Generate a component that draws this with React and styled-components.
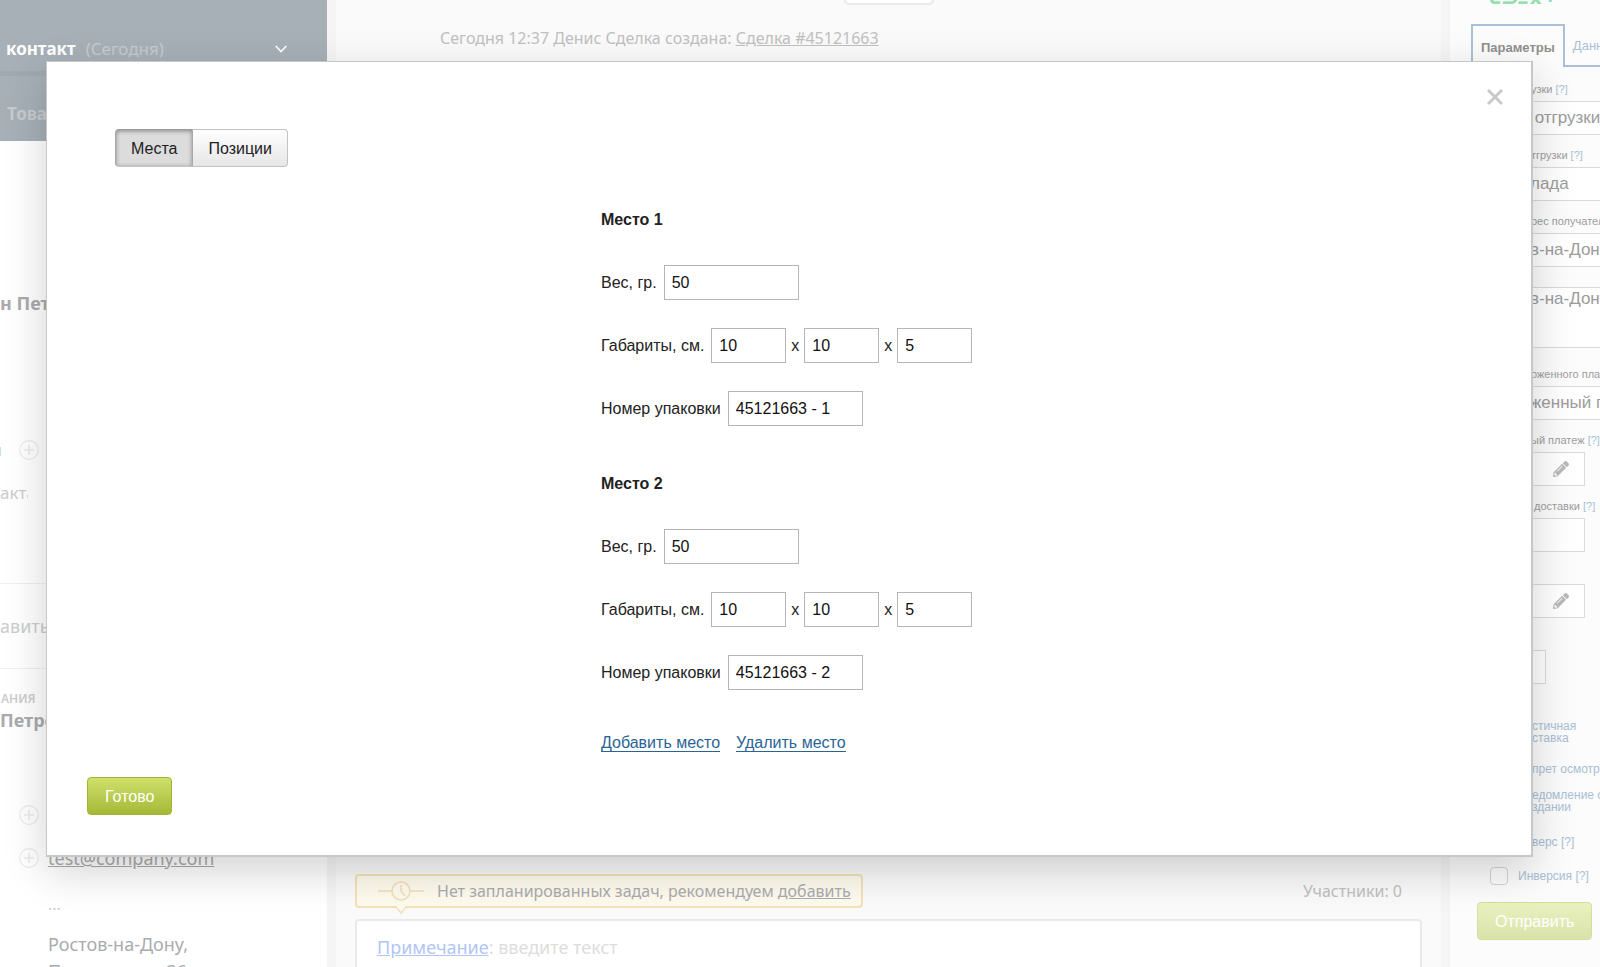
import React, { useState } from "react";
import styled, { createGlobalStyle, css } from "styled-components";
import { FaPencilAlt } from "react-icons/fa";

const emptyPlace = { weight: "50", length: "10", width: "10", height: "5" };

const App = () => {
  const [tab, setTab] = useState("places");
  const [places, setPlaces] = useState([
    { id: 1, ...emptyPlace },
    { id: 2, ...emptyPlace },
  ]);

  const addPlace = (e) => {
    e.preventDefault();
    setPlaces([...places, { id: places.length + 1, ...emptyPlace }]);
  };

  const removePlace = (e) => {
    e.preventDefault();
    setPlaces(places.slice(0, -1));
  };

  return (
    <Page>
      <GlobalStyle />
      <Contact />
      <Feed />
      <Widget />
      <Modal role="dialog" aria-modal="true">
        <CloseButton type="button" aria-label="Закрыть">
          <svg width="16" height="18" viewBox="0 0 16 18">
            <path d="M1 2l14 14M15 2L1 16" stroke="#c8c8c8" strokeWidth="3" />
          </svg>
        </CloseButton>
        <Switcher>
          <SwitchButton type="button" $active={tab === "places"} onClick={() => setTab("places")}>
            Места
          </SwitchButton>
          <SwitchButton type="button" $active={tab === "items"} onClick={() => setTab("items")}>
            Позиции
          </SwitchButton>
        </Switcher>
        <Form>
          {places.map((place) => (
            <Place key={place.id} place={place} />
          ))}
          <Links>
            <FormLink href="#add" onClick={addPlace}>Добавить место</FormLink>
            <FormLink href="#remove" onClick={removePlace}>Удалить место</FormLink>
          </Links>
        </Form>
        <GreenButton type="button">Готово</GreenButton>
      </Modal>
    </Page>
  );
};

const Place = ({ place }) => (
  <PlaceBlock>
    <h3>Место {place.id}</h3>
    <Row>
      <label htmlFor={`weight-${place.id}`}>Вес, гр.</label>
      <TextInput id={`weight-${place.id}`} defaultValue={place.weight} />
    </Row>
    <Row>
      <label htmlFor={`length-${place.id}`}>Габариты, см.</label>
      <TextInput $small id={`length-${place.id}`} defaultValue={place.length} />
      <label htmlFor={`width-${place.id}`}>x</label>
      <TextInput $small id={`width-${place.id}`} defaultValue={place.width} />
      <label htmlFor={`height-${place.id}`}>x</label>
      <TextInput $small id={`height-${place.id}`} defaultValue={place.height} />
    </Row>
    <Row>
      <label htmlFor={`pack-${place.id}`}>Номер упаковки</label>
      <TextInput id={`pack-${place.id}`} defaultValue={`45121663 - ${place.id}`} />
    </Row>
  </PlaceBlock>
);

const Plus = () => (
  <svg width="20" height="20" viewBox="0 0 20 20" fill="none" stroke="#e9eaea">
    <circle cx="10" cy="10" r="9.3" strokeWidth="1.2" />
    <path d="M10 5v10M5 10h10" strokeWidth="1.6" />
  </svg>
);

const Contact = () => (
  <ContactColumn>
    <ContactHeader>
      <b>контакт</b>
      <span>(Сегодня)</span>
      <svg width="12" height="8" viewBox="0 0 12 8" fill="none" stroke="#fff" strokeWidth="1.6">
        <path d="M0.7 1l5.3 5.6L11.3 1" />
      </svg>
    </ContactHeader>
    <ContactTabs>Това</ContactTabs>
    <ContactName $top={150}>н Пет</ContactName>
    <ContactRow $top={123}>
      <Cut>и</Cut>
      <Plus />
    </ContactRow>
    <Placeholder>акта</Placeholder>
    <AddContact>авить</AddContact>
    <Caption>АНИЯ</Caption>
    <ContactName $top={1}>Петро</ContactName>
    <ContactRow $top={71}>
      <Cut />
      <Plus />
    </ContactRow>
    <ContactRow $top={19}>
      <Cut />
      <Plus />
      <a href="#mail">test@company.com</a>
    </ContactRow>
    <Dots>...</Dots>
    <Address>
      Ростов-на-Дону,
      <br />
      Пушкинская, 36
    </Address>
  </ContactColumn>
);

const Feed = () => (
  <FeedColumn>
    <DatePill />
    <FeedEvent>
      Сегодня 12:37 Денис Сделка создана: <a href="#deal">Сделка #45121663</a>
    </FeedEvent>
    <FeedBottom>
      <TaskLine>
        <Task>
          <svg width="46" height="20" viewBox="0 0 46 20" fill="none" stroke="#f1dfb4" strokeWidth="1.5">
            <path d="M0 10h14M32 10h14M23 4v6l4 5" />
            <circle cx="23" cy="10" r="9" />
          </svg>
          <p>
            Нет запланированных задач, рекомендуем <a href="#task">добавить</a>
          </p>
          <TaskArrow width="14" height="8" viewBox="0 0 14 8">
            <path d="M1 0l6 7 6-7" fill="#fefaee" stroke="#f3e2b8" strokeWidth="1.5" />
          </TaskArrow>
        </Task>
        <span>Участники: 0</span>
      </TaskLine>
      <Note>
        <a href="#note">Примечание</a>: введите текст
      </Note>
    </FeedBottom>
  </FeedColumn>
);

const Widget = () => (
  <WidgetColumn>
    <Logo width="70" height="5" viewBox="0 0 70 5">
      <path
        d="M1 0h3.500l1 1.200h6L11 4H4.500Q1.500 3.500 1 0zM13.500 4l.8-2.800h9L25 0h3.500q-2 4-6 4zM29 4l.8-2.800h9L38.500 4zM41 4l3-4h3.500L44.800 4zM46 0h4l2.500 4h-4z"
        fill="#98dfae"
      />
      <path d="M60 0h3l-.8 2h-2.600z" fill="#8adfc4" />
    </Logo>
    <WidgetTabs>
      <WidgetTab type="button" $active>Параметры</WidgetTab>
      <WidgetTab type="button">Данные</WidgetTab>
    </WidgetTabs>
    <Field>
      <label htmlFor="ship-date">узки <a href="#h1">[?]</a></label>
      <input id="ship-date" defaultValue={"\u00a0отгрузки"} />
    </Field>
    <Field>
      <label htmlFor="ship-type">тгрузки <a href="#h2">[?]</a></label>
      <input id="ship-type" defaultValue="лада" />
    </Field>
    <Field>
      <label htmlFor="address">рес получателя</label>
      <input id="address" defaultValue="в-на-Дону" />
    </Field>
    <AddressArea aria-label="Адрес" defaultValue="в-на-Дону" />
    <Field>
      <label htmlFor="cod-type">оженного платежа</label>
      <input id="cod-type" defaultValue="женный платеж" />
    </Field>
    <Field $width={114}>
      <label htmlFor="cod">ый платеж <a href="#h3">[?]</a></label>
      <input id="cod" />
      <FaPencilAlt />
    </Field>
    <Field $width={114}>
      <label htmlFor="cost">&nbsp;доставки <a href="#h4">[?]</a></label>
      <input id="cost" />
    </Field>
    <Field $width={114} $top={32}>
      <input aria-label="Стоимость" />
      <FaPencilAlt />
    </Field>
    <Field $width={75} $top={32}>
      <input aria-label="Код" />
    </Field>
    <Options>
      <a href="#partial">стичная<br />ставка</a>
      <a href="#inspect">прет осмотра</a>
      <a href="#notify">едомление о<br />здании</a>
      <a href="#reverse">верс [?]</a>
    </Options>
    <Inversion>
      <input type="checkbox" />
      Инверсия [?]
    </Inversion>
    <GreenButton type="button" $faded>Отправить</GreenButton>
  </WidgetColumn>
);

export default App;

const GlobalStyle = createGlobalStyle`
*{
  box-sizing:border-box;
}
body{
  margin:0;
  overflow:hidden;
  background:#fff;
}
h3,p{
  margin:0;
}
svg{
  display:block;
  flex-shrink:0;
}
button,input,textarea{
  font-family:inherit;
}
`;

const Page = styled.div`
position:relative;
display:grid;
grid-template-columns:327px 1fr 150px;
grid-template-rows:minmax(0,1fr);
height:100vh;
overflow:hidden;
font-family:"Noto Sans","Open Sans",sans-serif;
font-size:16px;
line-height:24px;
a{
  color:inherit;
}
`;

const helvetica = css`
font-family:"Liberation Sans",Arial,sans-serif;
`;

/* contact card on the left */

const ContactColumn = styled.aside`
display:flex;
flex-direction:column;
min-width:0;
white-space:nowrap;
color:#a9abae;
& > *{
  flex-shrink:0;
}
`;

const ContactHeader = styled.header`
display:flex;
align-items:center;
height:71px;
padding:26px 40px 0 6px;
gap:10px;
background:#a7b0b7;
font-size:17px;
color:#c6cbcf;
b{
  color:#fff;
}
svg{
  margin-left:auto;
}
`;

const ContactTabs = styled.div`
height:70px;
padding:26px 0 0 7px;
border-top:5px solid #a0a9ae;
background:#a7b0b7;
font-size:17px;
color:#c6cbcf;
font-weight:700;
`;

const ContactName = styled.div`
margin-top:${(p) => p.$top}px;
font-size:18px;
font-weight:700;
`;

const ContactRow = styled.div`
display:flex;
align-items:center;
height:24px;
margin-top:${(p) => p.$top}px;
a{
  margin-left:9px;
  font-size:18px;
}
`;

const Cut = styled.span`
display:flex;
justify-content:flex-end;
width:2px;
margin-right:17px;
overflow:hidden;
color:#cbcdcd;
`;

const Placeholder = styled.div`
width:28px;
margin-top:19px;
overflow:hidden;
font-size:17px;
color:#cbcdcd;
`;

const AddContact = styled.div`
margin-top:78px;
padding:30px 0;
border:solid #f0f0f0;
border-width:1px 0;
font-size:18px;
color:#cbcdcd;
`;

const Caption = styled.div`
margin-top:22px;
padding-left:1px;
font-size:12px;
line-height:16px;
font-weight:600;
color:#cbcdcd;
`;

const Dots = styled.div`
margin-top:22px;
padding-left:48px;
color:#cbcdcd;
`;

const Address = styled.div`
margin-top:15px;
padding-left:48px;
font-size:18px;
line-height:27px;
`;

/* feed */

const FeedColumn = styled.main`
display:flex;
flex-direction:column;
min-width:0;
padding:0 19px;
border:solid #f5f5f5;
border-width:0 9px;
background:#fafafa;
color:#bfc0c0;
`;

const DatePill = styled.div`
width:90px;
height:5px;
margin:0 auto;
border:2px solid #e8e9e9;
border-top:0;
border-radius:0 0 14px 14px;
background:#fff;
`;

const FeedEvent = styled.div`
margin:21px 0 0 85px;
`;

const FeedBottom = styled.div`
display:flex;
flex-direction:column;
gap:11px;
margin-top:auto;
`;

const TaskLine = styled.div`
display:flex;
align-items:center;
justify-content:space-between;
padding-right:20px;
`;

const Task = styled.div`
position:relative;
display:flex;
align-items:center;
gap:13px;
height:34px;
padding:0 10px 0 21px;
border:2px solid #f3e2b8;
border-radius:4px;
background:#fefaee;
color:#aaacae;
`;

const TaskArrow = styled.svg`
position:absolute;
top:100%;
left:37px;
`;

const Note = styled.div`
height:48px;
padding:14px 20px 0;
border:2px solid #e8e9e9;
border-bottom:0;
border-radius:4px 4px 0 0;
background:#fff;
font-size:18px;
color:#dcdddd;
a{
  color:#b1c5f6;
}
`;

/* delivery widget on the right */

const WidgetColumn = styled.aside`
${helvetica}
display:flex;
flex-direction:column;
align-items:flex-start;
min-width:0;
padding-left:21px;
overflow:hidden;
white-space:nowrap;
background:#fcfcfc;
font-size:12px;
line-height:12px;
color:#9c9c9c;
& > *{
  flex-shrink:0;
}
a{
  color:#a9bfd4;
  text-decoration:none;
}
`;

const Logo = styled.svg`
margin-left:18px;
`;

const WidgetTabs = styled.div`
display:flex;
width:200px;
margin:19px 0 2px;
`;

const WidgetTab = styled.button`
height:43px;
padding:2px 8px 0;
border:solid #a9c0d6;
border-width:${(p) => (p.$active ? "2px 2px 0" : "0 0 2px")};
background:none;
font-size:13px;
font-weight:${(p) => (p.$active ? 700 : 400)};
color:${(p) => (p.$active ? "#8f8f8f" : "#a9bfd4")};
&:last-child{
  flex:1;
  text-align:left;
}
`;

const Field = styled.div`
position:relative;
width:${(p) => p.$width || 200}px;
margin-top:${(p) => p.$top || 13}px;
label{
  display:block;
  height:19px;
  padding:1px 0 0 60px;
  font-size:11px;
}
input{
  display:block;
  width:100%;
  height:34px;
  padding:0 0 0 58px;
  border:1px solid #dadada;
  background:#fff;
  font-size:17px;
  color:#9c9c9c;
}
svg{
  position:absolute;
  right:16px;
  bottom:9px;
  width:16px;
  height:16px;
  color:#b8b8b8;
}
`;

const AddressArea = styled.textarea`
width:200px;
height:61px;
margin:20px 0 6px;
padding:2px 0 0 58px;
border:1px solid #dadada;
background:#fff;
font-size:17px;
line-height:18px;
color:#9c9c9c;
resize:none;
`;

const Options = styled.div`
display:flex;
flex-direction:column;
gap:14px;
margin-top:36px;
padding-left:61px;
a:first-child{
  margin-bottom:5px;
}
a:nth-child(3){
  margin-bottom:9px;
}
`;

const Inversion = styled.label`
display:flex;
align-items:center;
gap:10px;
margin:19px 0 17px 19px;
color:#a9bfd4;
input{
  appearance:none;
  width:18px;
  height:18px;
  margin:0;
  border:1px solid #d4d4d4;
  border-radius:4px;
  background:#fdfdfd;
}
`;

/* modal */

const Modal = styled.section`
${helvetica}
position:absolute;
top:61px;
left:46px;
right:67px;
padding:67px 40px 40px;
border:solid #c6c8c8;
border-width:1px 2px 2px 1px;
background:#fff;
box-shadow:0 14px 40px rgba(0,0,0,.18);
font-size:16px;
line-height:20px;
color:#222;
`;

const CloseButton = styled.button`
position:absolute;
top:26px;
right:28px;
padding:0;
border:0;
background:none;
cursor:pointer;
`;

const Switcher = styled.div`
display:flex;
margin-left:28px;
`;

const SwitchButton = styled.button`
height:38px;
padding:2px 15px 0;
border:1px solid #c3c3c3;
border-radius:0 4px 4px 0;
background:linear-gradient(#fff,#e6e6e6);
font-size:16px;
color:#222;
cursor:pointer;
&:first-child{
  border-radius:4px 0 0 4px;
}
& + &{
  border-left:0;
}
${(p) => p.$active && css`
  border-color:#9a9a9a #a8a8a8 #c3c3c3;
  background:#dcdcdc;
  box-shadow:inset 0 1px 4px rgba(0,0,0,.4);
`}
`;

const Form = styled.form`
width:376px;
margin:43px auto 24px;
`;

const PlaceBlock = styled.div`
display:flex;
flex-direction:column;
gap:28px;
margin-bottom:48px;
h3{
  margin-bottom:7px;
  font-size:16px;
}
&:nth-last-child(2){
  margin-bottom:43px;
}
`;

const Row = styled.div`
display:flex;
align-items:center;
gap:5px;
label:first-child{
  margin-right:2px;
}
`;

const TextInput = styled.input`
width:${(p) => (p.$small ? 75 : 135)}px;
height:35px;
padding:0 7px;
border:1px solid #b5b5b5;
background:#fff;
font-size:16px;
color:#111;
`;

const Links = styled.div`
display:flex;
gap:16px;
`;

const FormLink = styled.a`
&&{
  color:#2a6496;
}
height:19px;
border-bottom:1px solid #2a6496;
line-height:19px;
text-decoration:none;
margin-bottom:1px;
`;

const GreenButton = styled.button`
display:block;
height:38px;
margin-left:${(p) => (p.$faded ? 6 : 0)}px;
padding:2px 17px 0;
border:1px solid ${(p) => (p.$faded ? "#d3de9d" : "#a3b52e")};
border-radius:4px;
background:${(p) => (p.$faded ? "linear-gradient(#e9f1bf,#dae2ab)" : "linear-gradient(#cfe06c,#a5b937)")};
font-size:16px;
color:#fff;
cursor:pointer;
`;
